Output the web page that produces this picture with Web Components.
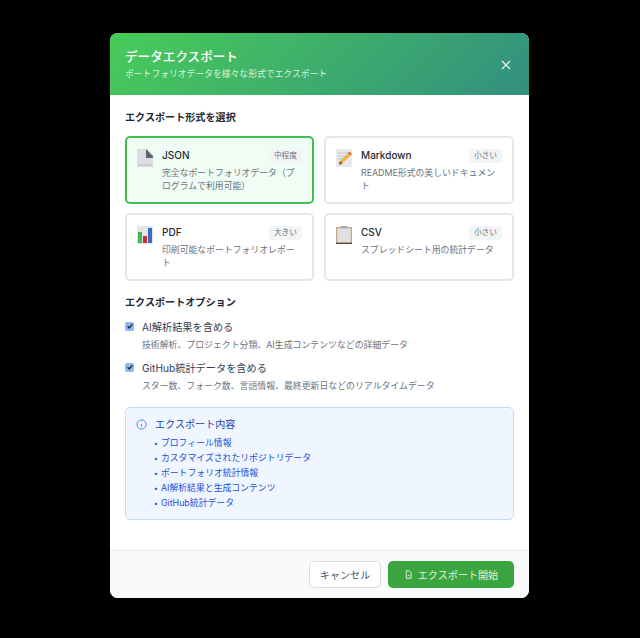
<!DOCTYPE html>
<html lang="ja"><head><meta charset="utf-8">
<style>
html,body{margin:0;height:100%;background:#000}
body{font-family:Inter,"Noto Sans CJK JP",sans-serif;display:flex;align-items:flex-start;justify-content:center;padding-top:33px;box-sizing:border-box;padding-right:1px}
</style></head><body>
<export-modal>
  <format-card slot="formats" name="JSON" size="中程度" selected>
    <svg slot="icon" viewBox="0 0 16 18" width="16" height="18"><path d="M0 0h9l7 7v11H0z" fill="#dcdde0"/><path d="M9 0l7 7v2H9z" fill="#5d6670"/><path d="M1 15h14v2H1z" fill="#cbccd0"/></svg>
    完全なポートフォリオデータ（プログラムで利用可能）
  </format-card>
  <format-card slot="formats" name="Markdown" size="小さい">
    <svg slot="icon" viewBox="0 0 16 18" width="16" height="18"><path d="M0 0h16v18H0z" fill="#e8e9ec"/><path d="M2 4h11M2 7h11M2 10h7M2 13h4" stroke="#c6c8cd"/><path d="M3 16l1-4 8-8 2.500 2.500-8 8z" fill="#f0b43c"/><path d="M12 4l1.500-1.500 2.500 2.500-1.500 1.500z" fill="#d86a3c"/><path d="M3 16l1-4 2.500 2.500z" fill="#7a5a30"/></svg>
    README形式の美しいドキュメント
  </format-card>
  <format-card slot="formats" name="PDF" size="大きい">
    <svg slot="icon" viewBox="0 0 16 18" width="16" height="18"><path d="M0 0h16v18H0z" fill="#e2e5ec"/><path d="M1 6h4v11H1z" fill="#45b555"/><path d="M6 10h4v7H6z" fill="#c9302c"/><path d="M11 2h4v15h-4z" fill="#3a66c4"/></svg>
    印刷可能なポートフォリオレポート
  </format-card>
  <format-card slot="formats" name="CSV" size="小さい">
    <svg slot="icon" viewBox="0 0 16 18" width="16" height="18"><path d="M0 1h16v17H0z" fill="#cda27e"/><path d="M1.200 2.200h13.600V16.300H1.200z" fill="#e0e1e4"/><path d="M0 16.800h16V18H0z" fill="#5a4a40"/><path d="M5 0h6v2.500H5z" fill="#a8abb0"/></svg>
    スプレッドシート用の統計データ
  </format-card>
  <option-row slot="options" label="AI解析結果を含める">技術解析、プロジェクト分類、AI生成コンテンツなどの詳細データ</option-row>
  <option-row slot="options" label="GitHub統計データを含める">スター数、フォーク数、言語情報、最終更新日などのリアルタイムデータ</option-row>
</export-modal>
<script>
function def(name, html, init){
  customElements.define(name, class extends HTMLElement{
    constructor(){super();this.attachShadow({mode:'open'}).innerHTML=html;}
    connectedCallback(){ if(init) init(this); }
  });
}
def('format-card',`<style>
:host{display:block;box-sizing:border-box;height:68px;border:2px solid #e5e7eb;border-radius:5px;background:#fff;padding:10px 10px 0 10px}
:host([selected]){border-color:#3fbf4f;background:#f0fdf4}
.row{display:flex;gap:9px}
.ic{flex:none;width:16px;padding-top:1px;line-height:0}
.main{flex:1;min-width:0}
.top{display:flex;justify-content:space-between;align-items:flex-start;height:18px}
.name{font-size:10px;font-weight:500;color:#1f2937;line-height:14px}
.badge{font-size:7.700px;line-height:14px;height:14px;padding:0 5px;border-radius:3px;background:#f3f4f6;color:#6b7280;margin-top:1px}
.desc{font-size:8.850px;line-height:13px;color:#6b7280}
</style><div class="row"><div class="ic"><slot name="icon"></slot></div><div class="main"><div class="top"><span class="name"></span><span class="badge"></span></div><div class="desc"><slot></slot></div></div></div>`,
el=>{const s=el.shadowRoot;s.querySelector('.name').textContent=el.getAttribute('name');s.querySelector('.badge').textContent=el.getAttribute('size');});
def('option-row',`<style>
:host{display:block}
.l{display:flex;align-items:center;gap:8px;height:16px}
.c{width:9px;height:9px;border-radius:2px;background:#8fb9f2;display:flex;align-items:center;justify-content:center;flex:none}
.t{font-size:10.200px;color:#374151}
.d{font-size:8.900px;color:#6b7280;margin:4px 0 0 17px;line-height:14px}
</style><div class="l"><span class="c"><svg viewBox="0 0 10 10" width="8" height="8"><path d="M2 5.200l2 2.200L8 2.600" fill="none" stroke="#1f2a3a" stroke-width="1.700"/></svg></span><span class="t"></span></div><div class="d"><slot></slot></div>`,
el=>{el.shadowRoot.querySelector('.t').textContent=el.getAttribute('label');});
def('info-box',`<style>
:host{display:block;box-sizing:border-box;height:113px;background:#eff6ff;border:1px solid #bfdbfe;border-radius:5px;padding:7px 10px;}
.h{display:flex;gap:8px;align-items:center;height:16px;color:#1e40af;font-size:10.100px;font-weight:400;}
svg{flex:none;margin-top:2px}
ul{list-style:none;margin:4px 0 0 18px;padding:0}
li{font-size:8.850px;line-height:15px;height:15px;color:#1d4ed8;}
li::before{content:"•";margin-right:3px;font-size:7px}
</style><div class="h"><svg viewBox="0 0 24 24" width="11" height="11" fill="none" stroke="#3b82f6" stroke-width="2"><circle cx="12" cy="12" r="10"/><path d="M12 11v6M12 7.500v.5"/></svg><span>エクスポート内容</span></div>
<ul><li>プロフィール情報</li><li>カスタマイズされたリポジトリデータ</li><li>ポートフォリオ統計情報</li><li>AI解析結果と生成コンテンツ</li><li>GitHub統計データ</li></ul>`);
def('export-modal',`<style>
:host{display:flex;flex-direction:column;width:419px;height:565px;background:#fff;border-radius:8px;overflow:hidden}
header{height:62px;box-sizing:border-box;padding:15px 15px 0;background:linear-gradient(135deg,#48cc58,#338f80);display:flex;justify-content:space-between;align-items:flex-start;color:#fff}
h1{margin:0;font-size:12.600px;line-height:18px;font-weight:500}
header p{margin:2px 0 0;font-size:8.800px;line-height:12px;color:#d6f3dc}
.x{margin:11px 2px 0 0;line-height:0}
main{flex:1;padding:15px 15px 0}
h2{margin:0;font-size:10.100px;line-height:14px;font-weight:600;color:#1f2937}
.grid{display:grid;grid-template-columns:189px 190px;gap:9px 10px;margin-top:12px}
.list{display:flex;flex-direction:column;gap:7px;margin-top:9px}
info-box{margin-top:14px}
footer{height:48px;box-sizing:border-box;background:#f9fafb;border-top:1px solid #e5e7eb;padding:10px 15px 0;display:flex;justify-content:flex-end;gap:7px}
.b{box-sizing:border-box;height:27px;border-radius:5px;font-size:10.100px;display:flex;align-items:center;justify-content:center}
.can{width:72px;border:1px solid #d9dce1;background:#fff;color:#4b5563}
.go{width:126px;background:#3ba53f;color:#e4f4e5;gap:5px}
</style>
<header><div><h1>データエクスポート</h1><p>ポートフォリオデータを様々な形式でエクスポート</p></div>
<span class="x"><svg viewBox="0 0 12 12" width="12" height="12"><path d="M2 2l8 8M10 2l-8 8" stroke="#e8f7ee" stroke-width="1.200"/></svg></span></header>
<main><h2>エクスポート形式を選択</h2><div class="grid"><slot name="formats"></slot></div>
<h2 style="margin-top:14px">エクスポートオプション</h2><div class="list"><slot name="options"></slot></div>
<info-box></info-box></main>
<footer><div class="b can">キャンセル</div><div class="b go"><svg viewBox="0 0 24 24" width="9" height="9" fill="none" stroke="#e4f4e5" stroke-width="2.500"><path d="M6 2h8l5 5v15H6z"/><path d="M10 15h5"/></svg>エクスポート開始</div></footer>`);
</script>
</body></html>
